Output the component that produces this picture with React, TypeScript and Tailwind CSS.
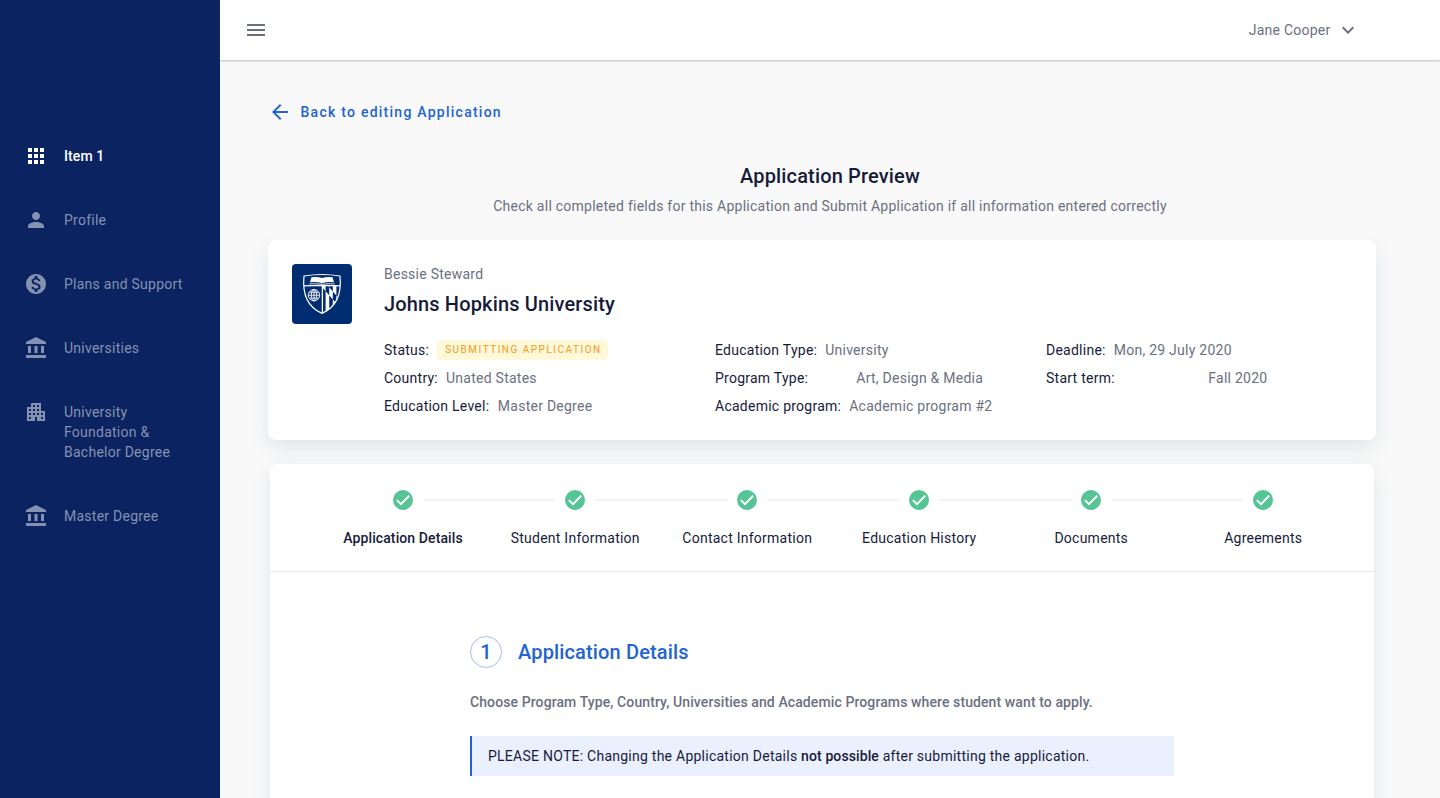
import type { ReactNode } from "react";
import { MdApps, MdPerson, MdMonetizationOn, MdApartment, MdMenu, MdArrowBack, MdKeyboardArrowDown } from "react-icons/md";

function BankIcon() {
  return (
    <svg width="24" height="24" viewBox="0 0 24 24" fill="currentColor">
      <path d="M12 1L2 6v2h20V6L12 1zM4 10h3v7H4zM10.5 10h3v7h-3zM17 10h3v7h-3zM2 19h20v3H2z" />
    </svg>
  );
}

function CheckBadge() {
  return (
    <svg width="20" height="20" viewBox="0 0 20 20">
      <circle cx="10" cy="10" r="10" fill="#56c596" />
      <path d="M3.900 10.100l4.100 4 8.200-8.300" fill="none" stroke="#fff" strokeWidth="2" />
    </svg>
  );
}

function UniversityLogo() {
  return (
    <svg width="60" height="60" viewBox="0 0 60 60" className="shrink-0">
      <defs>
        <clipPath id="shield">
          <path d="M12 12Q21 10.500 30 10.500Q39 10.500 48 12C49.500 27 46 42.500 30 49.400C14 42.500 10.500 27 12 12Z" />
        </clipPath>
      </defs>
      <rect width="60" height="60" rx="4" fill="#002d72" />
      <g clipPath="url(#shield)">
        <path d="M10 21.900Q30 20.900 50 21.900M30.400 21.500V50" stroke="#fff" strokeWidth="1.300" fill="none" />
        <path
          fill="#fff"
          fillRule="evenodd"
          d="M33.600 21.500H37.200V50H33.600zM40.800 21.500H44.400V50H40.800zM30.400 23.500L33.600 27.200L37.200 31.300L40.800 35.400L44.400 39.500L48 43.600V36L44.400 31.500L40.800 27.400L37.200 23.300L35.600 21.500H30.400z"
        />
      </g>
      <path d="M12 12Q21 10.500 30 10.500Q39 10.500 48 12C49.500 27 46 42.500 30 49.400C14 42.500 10.500 27 12 12Z" fill="none" stroke="#fff" strokeWidth="1.200" />
      <path d="M19.500 13.300q5.500-.8 10.500.8q5-1.600 10.500-.8l1.500 5q-6.500-1-12 .9q-5.500-1.900-12-.9z" fill="#fff" />
      <path d="M17.300 20q6.700-.8 12.700.3q6-1.100 12.700-.3" fill="none" stroke="#fff" strokeWidth=".8" />
      <g fill="none" stroke="#fff" strokeWidth=".9">
        <circle cx="22" cy="31.200" r="5.700" />
        <ellipse cx="22" cy="31.200" rx="2.700" ry="5.700" />
        <path d="M22 25.500v11.400M16.300 31.200h11.400M17.300 28.300h9.400M17.300 34.100h9.400" />
      </g>
    </svg>
  );
}

const NAV: { icon: ReactNode; label: string; active?: boolean }[] = [
  { icon: <MdApps size={24} />, label: "Item 1", active: true },
  { icon: <MdPerson size={24} />, label: "Profile" },
  { icon: <MdMonetizationOn size={24} />, label: "Plans and Support" },
  { icon: <BankIcon />, label: "Universities" },
  { icon: <MdApartment size={24} />, label: "University Foundation & Bachelor Degree" },
  { icon: <BankIcon />, label: "Master Degree" },
];

const STEPS = ["Application Details", "Student Information", "Contact Information", "Education History", "Documents", "Agreements"];

function Field({ label, gap = "pl-2", children }: { label: string; gap?: string; children: ReactNode }) {
  return (
    <div className="flex h-5 items-center whitespace-nowrap">
      <span className="text-[#171b3a]">{label}</span>
      <span className={gap}>{children}</span>
    </div>
  );
}

export default function App() {
  return (
    <div className="flex h-[798px] w-[1440px] overflow-hidden bg-[#f9f9f9] font-[Roboto,sans-serif] text-sm leading-5 tracking-[0.25px] text-[#6b7080]">
      <aside className="w-[220px] shrink-0 bg-[#0b2361] pt-36">
        <nav className="flex flex-col gap-10">
          {NAV.map((n) => (
            <a key={n.label} className={n.active ? "flex gap-4 pl-6 font-medium tracking-[0.1px] text-white" : "flex gap-4 pl-6 text-[#8591b0]"}>
              <span className="h-6 w-6 shrink-0">{n.icon}</span>
              <span className="w-[125px] py-0.5">{n.label}</span>
            </a>
          ))}
        </nav>
      </aside>

      <div className="flex min-w-0 flex-1 flex-col">
        <header className="z-10 flex h-[60px] shrink-0 items-center justify-between bg-white pr-20 pl-6 shadow-[0_1px_2px_rgba(60,80,90,0.36)]">
          <MdMenu size={24} />
          <div className="flex items-center gap-[5.5px]">
            <span>Jane Cooper</span>
            <MdKeyboardArrowDown size={24} />
          </div>
        </header>

        <main className="flex flex-col px-12 pt-10">
          <a className="flex h-6 items-center gap-[8.5px] font-medium tracking-[1.25px] text-[#2264d1]">
            <MdArrowBack size={24} />
            Back to editing Application
          </a>

          <div className="mt-10 text-center">
            <h1 className="text-xl leading-6 font-medium tracking-[0.15px] text-[#171b3a]">Application Preview</h1>
            <p className="mt-2">Check all completed fields for this Application and Submit Application if all information entered correctly</p>
          </div>

          <section className="mt-6 flex h-[200px] w-[1108px] shrink-0 gap-8 rounded-lg bg-white p-6 shadow-[0_8px_20px_rgba(20,70,110,0.1)]">
            <UniversityLogo />
            <div className="flex-1">
              <p>Bessie Steward</p>
              <h2 className="mt-2 text-xl leading-6 font-medium tracking-[0.15px] text-[#171b3a]">Johns Hopkins University</h2>
              <div className="mt-6 grid grid-cols-[331px_331px_1fr]">
                <div className="flex flex-col gap-2">
                  <Field label="Status:">
                    <span className="block h-5 rounded bg-[#fff8d9] pr-1.5 pl-2 text-[10px] leading-5 tracking-[1.5px] text-[#f59a1b]">SUBMITTING APPLICATION</span>
                  </Field>
                  <Field label="Country:">Unated States</Field>
                  <Field label="Education Level:" gap="pl-[8.5px]">Master Degree</Field>
                </div>
                <div className="flex flex-col gap-2">
                  <Field label="Education Type:">University</Field>
                  <Field label="Program Type:" gap="pl-12">Art, Design &amp; Media</Field>
                  <Field label="Academic program:">Academic program #2</Field>
                </div>
                <div className="flex flex-col gap-2">
                  <Field label="Deadline:">Mon, 29 July 2020</Field>
                  <Field label="Start term:" gap="pl-[93.5px]">Fall 2020</Field>
                </div>
              </div>
            </div>
          </section>

          <section className="mt-6 ml-0.5 h-[400px] w-[1104px] rounded-lg bg-white shadow-[0_8px_20px_rgba(20,70,110,0.1)]">
            <ol className="flex h-[108px] border-b border-[#e8e9eb] pt-[26px] pl-[47px]">
              {STEPS.map((s, i) => (
                <li key={s} className="relative flex w-[172px] shrink-0 flex-col items-center">
                  <CheckBadge />
                  {i < STEPS.length - 1 && <span className="absolute top-[9px] left-[106px] h-0.5 w-[132px] bg-[#f3f3f4]" />}
                  <span className={i === 0 ? "mt-[18px] font-medium tracking-[0.1px] text-[#171b3a]" : "mt-[18px] pl-[0.5px] text-[#171b3a]"}>{s}</span>
                </li>
              ))}
            </ol>
            <div className="w-[904px] pt-16 pl-[200px]">
              <div className="flex items-center gap-4 text-xl leading-6 font-medium tracking-[0.15px] text-[#2264d1]">
                <span className="flex h-8 w-8 items-center justify-center rounded-full border border-[#a7c1ed]">1</span>
                <h3>Application Details</h3>
              </div>
              <p className="mt-6 font-medium tracking-[0.1px]">Choose Program Type, Country, Universities and Academic Programs where student want to apply.</p>
              <div className="mt-6 h-10 border-l-2 border-[#2264d1] bg-[#ebf0ff] py-2.5 pl-4 text-[#171b3a]">
                PLEASE NOTE: Changing the Application Details <b className="font-medium tracking-[0.1px]">not possible</b> after submitting the application.
              </div>
            </div>
          </section>
        </main>
      </div>
    </div>
  );
}
